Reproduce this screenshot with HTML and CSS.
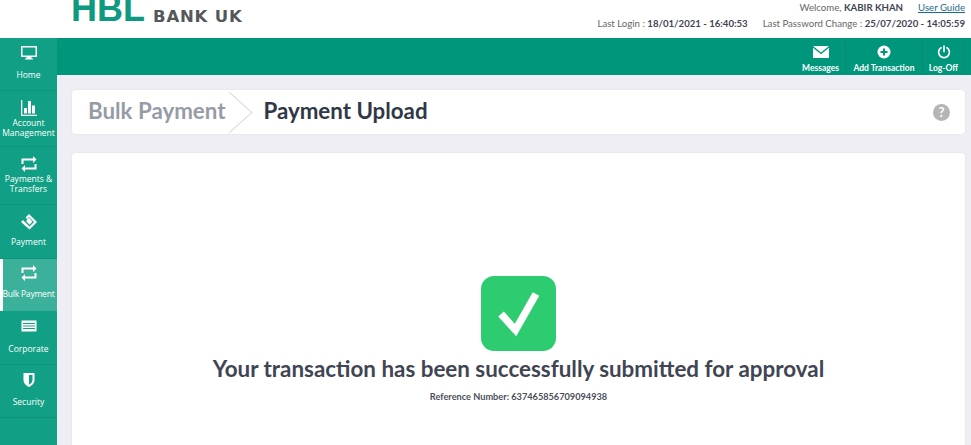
FILE: index.html
```html
<!DOCTYPE html>
<html lang="en">
<head>
    <meta charset="UTF-8">
    <meta name="viewport" content="width=device-width, initial-scale=1.0">
    <title>Payment Upload</title>
    <link rel="stylesheet" href="styles.css">
</head>
<body>
    <header class="top-header">
        <div class="logo">
            <span class="logo-mark">HBL</span>
            <span class="logo-text">BANK UK</span>
        </div>
        <div class="user-info">
            <div class="user-line">
                <span>Welcome, <b>KABIR KHAN</b></span>
                <a class="guide-link" href="#">User Guide</a>
            </div>
            <div class="login-line">
                <span>Last Login : <b>18/01/2021 - 16:40:53</b></span>
                <span>Last Password Change : <b>25/07/2020 - 14:05:59</b></span>
            </div>
        </div>
    </header>

    <div class="layout">
        <nav class="sidebar">
            <a class="side-item side-item-home" href="#">
                <svg class="side-icon" viewBox="0 0 16 16"><path fill="#fff" d="M0 1h16v11h-5.500v1.500h1.500v1H4v-1h1.500V12H0zM1.500 2.500v8h13v-8z"/></svg>
                <span>Home</span>
            </a>
            <a class="side-item side-item-account" href="#">
                <svg class="side-icon" viewBox="0 0 16 16"><path fill="#fff" d="M0 0h1.300v14.700H16V16H0zM3 8h3v5.500H3zM7 1h3v12.500H7zM11 5.500h3v8h-3z"/></svg>
                <span>Account Management</span>
            </a>
            <a class="side-item side-item-transfers" href="#">
                <svg class="side-icon" viewBox="0 0 16 16"><path fill="#fff" d="M0.500 8V2.500h11.500V0l3.500 3.500L12 7V4.500H2.500V8zM15.500 8v5.500H4V16L0.500 12.500 4 9v2.500h9.500V8z"/></svg>
                <span>Payments &amp; Transfers</span>
            </a>
            <a class="side-item side-item-payment" href="#">
                <svg class="side-icon" viewBox="0 0 16 16"><path fill="#fff" fill-rule="evenodd" d="M8 0 16 8l-7.500 7.500L0 8l2-2 6.500 6.500L13 8 8 3 6 5 4.500 3.500z"/><path fill="#fff" d="M6 5.500 8 3.800l3.500 4-3 3-3.200-3.300z"/></svg>
                <span>Payment</span>
            </a>
            <a class="side-item side-item-bulk active" href="#">
                <svg class="side-icon" viewBox="0 0 16 16"><path fill="#fff" d="M0.500 8V2.500h11.500V0l3.500 3.500L12 7V4.500H2.500V8zM15.500 8v5.500H4V16L0.500 12.500 4 9v2.500h9.500V8z"/></svg>
                <span>Bulk Payment</span>
            </a>
            <a class="side-item side-item-corporate" href="#">
                <svg class="side-icon" viewBox="0 0 16 16"><path fill="#fff" d="M0.500 2.500h15v11h-15zM2 5v1h12V5zM2 7.500v1h12v-1zM2 10v1h12v-1z"/></svg>
                <span>Corporate</span>
            </a>
            <a class="side-item side-item-security" href="#">
                <svg class="side-icon" viewBox="0 0 16 16"><path fill="#fff" fill-rule="evenodd" d="M2.500 1h11v7c0 3.500-2.500 5.500-5.500 7-3-1.500-5.500-3.500-5.500-7zM8 3v9.500c2-1 3.500-2.500 3.500-4.500V3z"/></svg>
                <span>Security</span>
            </a>
        </nav>

        <div class="main-area">
            <div class="action-bar">
                <a class="action-item action-messages" href="#">
                    <svg class="action-icon" viewBox="0 0 16 12"><path fill="#fff" d="M0 0h16L8 6.500zM0 1.800l8 6.500 8-6.500V12H0z"/></svg>
                    <span>Messages</span>
                </a>
                <a class="action-item action-add" href="#">
                    <svg class="action-icon" viewBox="0 0 16 14"><circle cx="8" cy="7" r="6.500" fill="#fff"/><path fill="#00967B" d="M7 3.500h2V6h2.500v2H9v2.500H7V8H4.500V6H7z"/></svg>
                    <span>Add Transaction</span>
                </a>
                <a class="action-item action-logoff" href="#">
                    <svg class="action-icon" viewBox="0 0 16 14"><path fill="none" stroke="#fff" stroke-width="1.700" stroke-linecap="round" d="M5 2.800a5.400 5.400 0 1 0 6 0M8 1v5.500"/></svg>
                    <span>Log-Off</span>
                </a>
            </div>

            <div class="content">
                <div class="breadcrumb-card">
                    <span class="crumb-parent">Bulk Payment</span>
                    <span class="crumb-arrow"></span>
                    <h1 class="crumb-current">Payment Upload</h1>
                    <span class="help-icon">?</span>
                </div>

                <div class="result-card">
                    <div class="success-badge">
                        <svg viewBox="0 0 75 75"><path fill="none" stroke="#fff" stroke-width="7.500" d="M20 38 34.500 54 55 18"/></svg>
                    </div>
                    <h2 class="result-title">Your transaction has been successfully submitted for approval</h2>
                    <p class="result-ref">Reference Number: 637465856709094938</p>
                </div>
            </div>
        </div>
    </div>
</body>
</html>
```

FILE: styles.css
```css
html, body {
    margin: 0;
    height: 445px;
    overflow: hidden;
}

body {
    background-color: #EEEEF4;
    font-family: Lato, sans-serif;
    color: #3f4553;
}

a {
    text-decoration: none;
}

.top-header {
    height: 38px;
    background-color: #fff;
    display: flex;
    justify-content: space-between;
    overflow: hidden;
}

.logo {
    display: flex;
    align-items: flex-end;
    height: 24px;
    padding-left: 71px;
}

.logo-mark {
    font-family: "Liberation Sans", sans-serif;
    font-weight: bold;
    font-size: 36px;
    line-height: 30px;
    color: #0E9A80;
    margin-right: 8px;
    width: 74px;
    flex: none;
}

.logo-text {
    font-family: "DejaVu Sans", sans-serif;
    font-weight: bold;
    font-size: 16.500px;
    line-height: 15px;
    letter-spacing: 0.8px;
    color: #55585b;
}

.user-info {
    padding-right: 6px;
    font-size: 9.650px;
    color: #666;
}

.user-info b {
    color: #3f4553;
}

.user-line {
    display: flex;
    justify-content: flex-end;
    gap: 15px;
    height: 15px;
    line-height: 14px;
}

.guide-link {
    color: #1c6b8c;
    text-decoration: underline;
}

.login-line {
    display: flex;
    justify-content: flex-end;
    gap: 15px;
    line-height: 17px;
}

.layout {
    display: flex;
    height: 407px;
}

.sidebar {
    width: 57px;
    flex: none;
    background-color: #11A085;
}

.side-item {
    display: flex;
    flex-direction: column;
    align-items: center;
    box-sizing: border-box;
    padding-top: 7px;
    color: #fff;
    font-family: "Open Sans", sans-serif;
    font-size: 8.500px;
    line-height: 9.500px;
    text-align: center;
    border-bottom: 1px solid #0F9379;
}

.side-icon {
    width: 16px;
    height: 16px;
    flex: none;
    margin-bottom: 9px;
}

.side-item-home { height: 53px; }
.side-item-account { height: 56px; padding-top: 9px; }
.side-item-transfers { height: 58px; padding-top: 9px; }
.side-item-payment { height: 54px; padding-top: 9px; }
.side-item-bulk { height: 52px; padding-top: 6px; }
.side-item-corporate { height: 54px; padding-top: 7px; }
.side-item-security { height: 53px; padding-top: 7px; }

.side-item-account .side-icon,
.side-item-transfers .side-icon {
    margin-bottom: 2px;
}

.side-item-payment .side-icon {
    margin-bottom: 7px;
}

.side-item-bulk .side-icon {
    margin-bottom: 8px;
}

.side-item-corporate .side-icon {
    margin-bottom: 10px;
}

.side-item.active {
    background-color: #3BB19B;
    box-shadow: inset 3px 0 0 #fff;
    border-bottom: none;
    letter-spacing: -0.2px;
    white-space: nowrap;
}

.main-area {
    flex: 1;
    min-width: 0;
}

.action-bar {
    height: 37px;
    background-color: #00967B;
    display: flex;
    justify-content: flex-end;
    padding-right: 6px;
}

.action-item {
    display: flex;
    flex-direction: column;
    align-items: center;
    box-sizing: border-box;
    padding-top: 7px;
    color: #fff;
    font-size: 8.500px;
    font-weight: 700;
    line-height: 12px;
    border-right: 1px solid #0B8A70;
    white-space: nowrap;
}

.action-messages { width: 50px; }
.action-add { width: 77px; }
.action-logoff { width: 42px; }

.action-icon {
    height: 14px;
    width: 16px;
    margin-bottom: 3px;
}

.content {
    padding: 15px 6px 0 15px;
}

.breadcrumb-card {
    display: flex;
    align-items: center;
    height: 44px;
    background-color: #fff;
    border-radius: 4px;
    box-shadow: 0 0 2px rgba(0, 0, 0, 0.08);
    padding: 0 15px 0 16px;
    overflow: hidden;
}

.crumb-parent {
    font-size: 22.300px;
    line-height: 42px;
    height: 44px;
    font-weight: 700;
    color: #969CA6;
    white-space: nowrap;
}

.crumb-arrow {
    width: 30px;
    height: 30px;
    margin: 0 18px 0 -11px;
    border-top: 1px solid #d8dadd;
    border-right: 1px solid #d8dadd;
    transform: rotate(45deg) skew(-3deg, -3deg);
    flex: none;
}

.crumb-current {
    margin: 0;
    font-size: 22.300px;
    line-height: 42px;
    height: 44px;
    font-weight: 700;
    color: #303846;
    flex: 1;
}

.help-icon {
    width: 17px;
    height: 17px;
    border-radius: 50%;
    background-color: #B5B5B5;
    color: #fff;
    font-size: 13px;
    font-weight: 700;
    line-height: 17px;
    text-align: center;
}

.result-card {
    margin-top: 19px;
    height: 300px;
    background-color: #fff;
    border-radius: 4px;
    box-shadow: 0 0 2px rgba(0, 0, 0, 0.08);
    display: flex;
    flex-direction: column;
    align-items: center;
    padding-top: 123px;
    box-sizing: border-box;
}

.success-badge {
    width: 75px;
    height: 75px;
    border-radius: 13px;
    background-color: #2ECC71;
}

.success-badge svg {
    display: block;
}

.result-title {
    margin: 3px 0 0;
    font-size: 22.400px;
    line-height: 30px;
    font-weight: 700;
    color: #3f4553;
    white-space: nowrap;
}

.result-ref {
    margin: 7px 0 0;
    font-size: 9.200px;
    line-height: 12px;
    font-weight: 700;
    color: #4a4f5a;
}
```
